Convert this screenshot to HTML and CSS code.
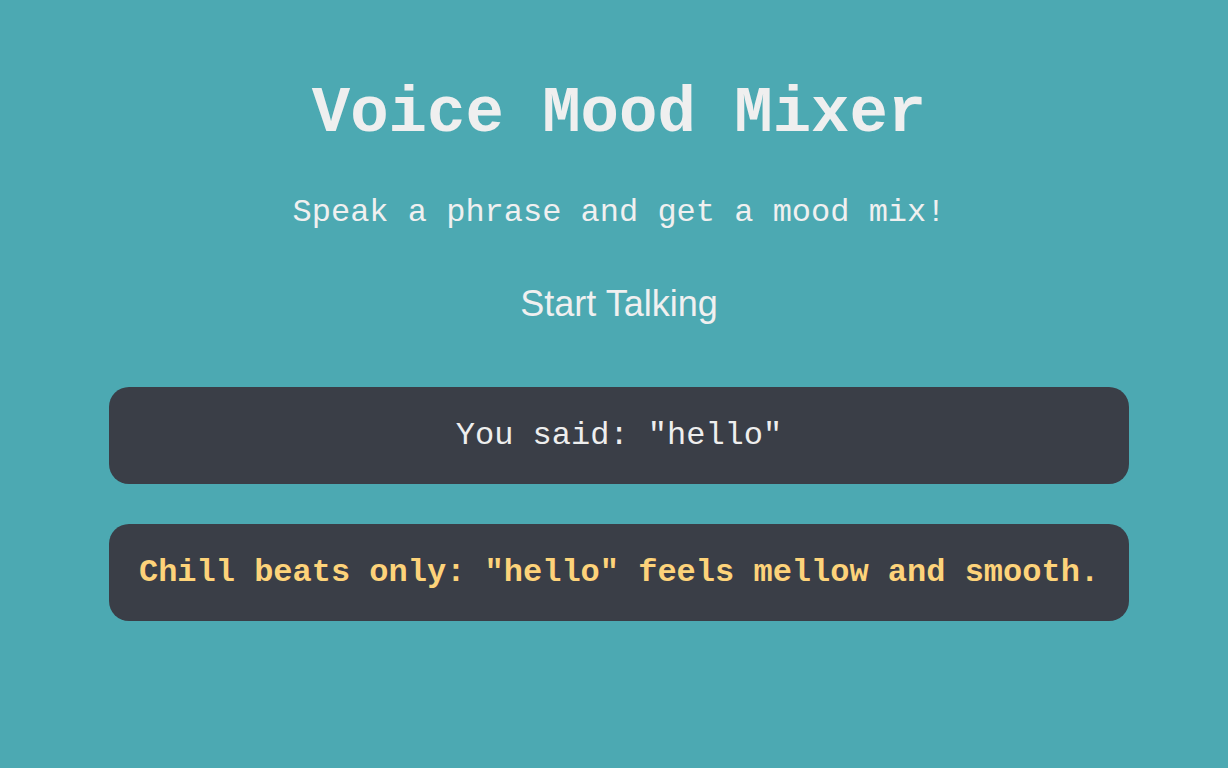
FILE: index.html
```html
<!DOCTYPE html>
<html lang="en">
<head>
<meta charset="utf-8">
<title>Voice Mood Mixer</title>
<link rel="stylesheet" href="styles.css">
</head>
<body>
<main class="app">
  <h1 class="title">Voice Mood Mixer</h1>
  <p class="subtitle">Speak a phrase and get a mood mix!</p>
  <button class="talk-btn" type="button">Start Talking</button>
  <div class="panel transcript">You said: "hello"</div>
  <div class="panel mood">Chill beats only: "hello" feels mellow and smooth.</div>
</main>
</body>
</html>
```
FILE: styles.css
```css
html, body {
  margin: 0;
  padding: 0;
  background: #4ca9b2;
  height: 100%;
}
body {
  padding-left: 10px;
  box-sizing: border-box;
  font-family: "Courier New", "Nimbus Mono PS", "Nimbus Mono L", FreeMono, "Liberation Mono", monospace;
  color: #f0f0f0;
}
.app {
  max-width: 1020px;
  margin: 0 auto;
  padding-top: 78px;
  display: flex;
  flex-direction: column;
  align-items: center;
  text-align: center;
}
.title {
  margin: 0;
  font-size: 64px;
  font-weight: bold;
  line-height: 72px;
  color: #efefef;
}
.subtitle {
  margin: 45px 0 0;
  font-size: 32px;
  line-height: 36px;
}
.talk-btn {
  margin-top: 53px;
  background: transparent;
  border: none;
  padding: 0;
  font-family: "Liberation Sans", Arial, sans-serif;
  font-size: 36px;
  line-height: 40px;
  color: #f0f0f0;
  cursor: pointer;
}
.panel {
  align-self: stretch;
  background: #3a3e47;
  border-radius: 20px;
  padding: 30px 20px;
  font-size: 32px;
  line-height: 37px;
  white-space: nowrap;
}
.transcript {
  margin-top: 63px;
  color: #eeeeee;
}
.mood {
  margin-top: 40px;
  font-weight: bold;
  color: #fdd37a;
}
```
